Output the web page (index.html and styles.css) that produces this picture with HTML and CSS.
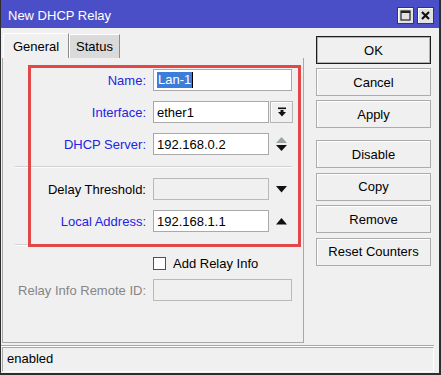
FILE: index.html
```html
<!DOCTYPE html>
<html>
<head>
<meta charset="utf-8">
<link rel="stylesheet" href="styles.css">
</head>
<body>
<div class="window">
  <div class="titlebar">
    <span class="title">New DHCP Relay</span>
    <span class="tb-btn"><svg width="11" height="11" viewBox="0 0 11 11"><rect x="1" y="1" width="9" height="9" fill="none" stroke="#222" stroke-width="1.2"/><rect x="1" y="1" width="9" height="2" fill="#222"/></svg></span>
    <span class="tb-btn"><svg width="11" height="11" viewBox="0 0 11 11"><path d="M2 2 L9 9 M9 2 L2 9" stroke="#111" stroke-width="2.2" fill="none"/></svg></span>
  </div>
  <div class="main">
    <div class="left">
      <div class="tabs">
        <div class="tab active">General</div>
        <div class="tab inactive">Status</div>
      </div>
      <div class="panel">
        <div class="row">
          <div class="label blue">Name:</div>
          <div class="input w-full"><span class="sel">Lan-1</span><span class="caret"></span></div>
        </div>
        <div class="row">
          <div class="label blue">Interface:</div>
          <div class="input w-short">ether1</div>
          <div class="side boxed"><svg width="10" height="10" viewBox="0 0 10 10"><rect x="1" y="0.5" width="8" height="1.6" fill="#111"/><rect x="3.5" y="3" width="3" height="2" fill="#111"/><polygon points="1,5 9,5 5,9.5" fill="#111"/></svg></div>
        </div>
        <div class="row">
          <div class="label blue">DHCP Server:</div>
          <div class="input w-short">192.168.0.2</div>
          <div class="side"><svg width="11" height="14" viewBox="0 0 11 14"><polygon points="0,6 5.5,0 11,6" fill="#9ea59e"/><polygon points="0,8 11,8 5.5,14" fill="#111"/></svg></div>
        </div>
        <div class="sep sep1"></div>
        <div class="row">
          <div class="label">Delay Threshold:</div>
          <div class="input w-short disabled"></div>
          <div class="side"><svg width="11" height="7" viewBox="0 0 11 7"><polygon points="0,0 11,0 5.5,6.5" fill="#111"/></svg></div>
        </div>
        <div class="row">
          <div class="label blue">Local Address:</div>
          <div class="input w-short">192.168.1.1</div>
          <div class="side"><svg width="11" height="7" viewBox="0 0 11 7"><polygon points="0,6.5 11,6.5 5.5,0" fill="#111"/></svg></div>
        </div>
        <div class="sep sep2"></div>
        <div class="check-row">
          <span class="checkbox"></span>
          <span class="check-label">Add Relay Info</span>
        </div>
        <div class="row">
          <div class="label grey">Relay Info Remote ID:</div>
          <div class="input w-full disabled"></div>
        </div>
      </div>
    </div>
    <div class="buttons">
      <div class="btn default">OK</div>
      <div class="btn">Cancel</div>
      <div class="btn">Apply</div>
      <div class="btn group2 first">Disable</div>
      <div class="btn group2">Copy</div>
      <div class="btn group2">Remove</div>
      <div class="btn group2">Reset Counters</div>
    </div>
  </div>
  <div class="status-sep"></div>
  <div class="status-box">enabled</div>
  <div class="highlight-box"></div>
</div>
</body>
</html>
```

FILE: styles.css
```css
body {
  margin: 0;
  font-family: "Liberation Sans", Arial, sans-serif;
  font-size: 13px;
  color: #000;
  background: #fff;
}

.window {
  position: relative;
  width: 441px;
  height: 375px;
  box-sizing: border-box;
  border-left: 1px solid #2e2e2e;
  border-right: 2px solid #2e2e2e;
  border-bottom: 2px solid #2e2e2e;
  background: #f0f0f0;
  display: flex;
  flex-direction: column;
}

.titlebar {
  height: 28px;
  flex: none;
  box-sizing: border-box;
  background: #4b4fc7;
  color: #fff;
  display: flex;
  align-items: flex-start;
  padding: 0 5px 0 7px;
}

.title {
  flex: 1;
  line-height: 15px;
  margin-top: 8px;
}

.tb-btn {
  width: 17px;
  height: 17px;
  margin-top: 7px;
  margin-left: 3px;
  box-sizing: border-box;
  border: 1px solid #3a3a3a;
  background: #e2e2e2;
  box-shadow: inset 1px 1px 0 #fff;
  display: flex;
  align-items: center;
  justify-content: center;
}

.main {
  display: flex;
  height: 315px;
  flex: none;
}

.left {
  margin-left: 1px;
  width: 302px;
  display: flex;
  flex-direction: column;
  padding-top: 5px;
  box-sizing: border-box;
}

.tabs {
  display: flex;
  height: 25px;
  flex: none;
  padding-left: 1px;
}

.tab {
  box-sizing: border-box;
  border-left: 1px solid #fff;
  border-top: 1px solid #fff;
  border-right: 1px solid #8c8c8c;
  display: flex;
  align-items: center;
  justify-content: center;
}

.tab.active {
  width: 66px;
  height: 25px;
  background: #f0f0f0;
}

.tab.inactive {
  width: 51px;
  height: 24px;
  margin-top: 1px;
  background: #dadada;
}

.panel {
  flex: 1;
  box-sizing: border-box;
  border-left: 1px solid #a8a8a8;
  border-right: 1px solid #a8a8a8;
  border-bottom: 1px solid #a8a8a8;
  padding-top: 11px;
  display: flex;
  flex-direction: column;
}

.row {
  display: flex;
  align-items: center;
  height: 22px;
  margin-bottom: 10px;
  flex: none;
}

.label {
  width: 150px;
  box-sizing: border-box;
  padding-right: 7px;
  text-align: right;
  white-space: nowrap;
}

.label.blue { color: #2424e2; }
.label.grey { color: #858585; }

.input {
  box-sizing: border-box;
  height: 22px;
  border: 1px solid #a9a9a9;
  background: #fff;
  padding: 0 3px;
  display: flex;
  align-items: center;
  white-space: nowrap;
}

.input.disabled {
  background: #f0f0f0;
  border-color: #b9b9b9;
}

.w-full { width: 139px; }
.w-short { width: 116px; }

.sel {
  background: #3b7dd8;
  color: #fff;
  padding: 0 1px;
  line-height: 16px;
}

.caret {
  display: inline-block;
  width: 1px;
  height: 16px;
  background: #000;
}

.side {
  width: 23px;
  height: 22px;
  margin-left: 1px;
  box-sizing: border-box;
  display: flex;
  align-items: center;
  justify-content: center;
}

.side.boxed {
  border: 1px solid #b4b4b4;
  background: #f0f0f0;
  box-shadow: inset 1px 1px 0 #fff;
}

.sep {
  width: 277px;
  margin-left: 12px;
  border-top: 1px solid #d2d2d2;
  border-bottom: 1px solid #fcfcfc;
  flex: none;
}

.sep1 { margin-top: 1px; margin-bottom: 10px; }
.sep2 { margin-top: 2px; margin-bottom: 11px; }

.check-row {
  display: flex;
  align-items: center;
  height: 13px;
  margin-bottom: 9px;
  padding-left: 150px;
  flex: none;
}

.checkbox {
  width: 13px;
  height: 13px;
  box-sizing: border-box;
  border: 1px solid #505050;
  background: #fff;
}

.check-label {
  margin-left: 7px;
  white-space: nowrap;
}

.buttons {
  margin-left: 12px;
  width: 115px;
  padding-top: 8px;
  display: flex;
  flex-direction: column;
}

.btn {
  height: 28px;
  flex: none;
  box-sizing: border-box;
  border: 1px solid #ababab;
  background: #f0f0f0;
  box-shadow: inset 1px 1px 0 #fff;
  margin-bottom: 4px;
  display: flex;
  align-items: center;
  justify-content: center;
  white-space: nowrap;
}

.btn.default {
  border-color: #1e1e1e;
  box-shadow: inset 0 0 0 1px #b0b0b0;
}

.btn.group2 { margin-bottom: 4.5px; }
.btn.first { margin-top: 8px; }

.status-sep {
  margin-top: 2px;
  margin-right: 5px;
  border-top: 1px solid #a8a8a8;
  border-bottom: 1px solid #fff;
  flex: none;
}

.status-box {
  height: 25px;
  margin-left: 1px;
  margin-right: 5px;
  box-sizing: border-box;
  border: 1px solid;
  border-color: #a8a8a8 #fff #fff #a8a8a8;
  padding-left: 4px;
  padding-bottom: 2px;
  display: flex;
  align-items: center;
  flex: none;
}

.highlight-box {
  position: absolute;
  left: 27px;
  top: 65px;
  width: 273px;
  height: 182px;
  box-sizing: border-box;
  border: 3px solid #e24848;
  pointer-events: none;
}
```
